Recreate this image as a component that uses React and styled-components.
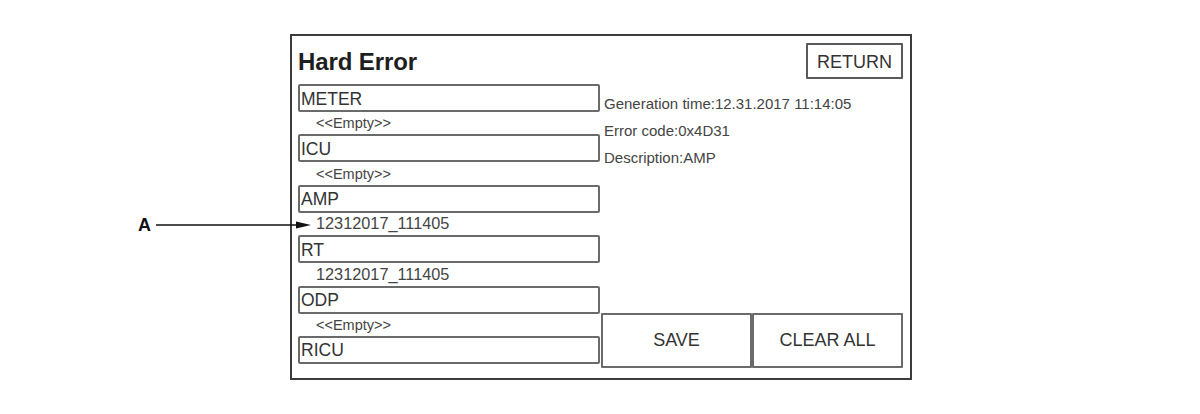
import styled, { createGlobalStyle } from "styled-components"

const Global = createGlobalStyle`
  body {
    margin: 0;
    background: #fff;
    font-family: "Liberation Sans", Arial, sans-serif;
  }
`;

const Page = styled.div`
  position: relative;
  width: 1200px;
  height: 414px;
  padding: 34px 0 0 2px;
  box-sizing: border-box;
`;

const Frame = styled.div`
  width: 622px;
  height: 346px;
  margin: 0 auto;
  box-sizing: border-box;
  border: 2px solid #3c3c3c;
  padding: 7px 7px 10px 6px;
  display: grid;
  grid-template-columns: 302px 302px;
  grid-template-rows: 36px 1fr;
  column-gap: 1px;
  row-gap: 5px;
`;

const Header = styled.div`
  grid-column: 1 / 3;
  display: flex;
  align-items: center;
  justify-content: space-between;
`;

const Title = styled.h1`
  margin: 0;
  font-size: 24px;
  font-weight: 700;
  color: #1e1e1e;
  line-height: 1;
  padding-top: 1px;
  letter-spacing: -0.1px;
`;

const ReturnButton = styled.button`
  width: 97px;
  height: 36px;
  box-sizing: border-box;
  border: 2px solid #5a5a5a;
  border-radius: 1px;
  background: #fff;
  font-family: inherit;
  font-size: 18px;
  color: #333;
  padding: 2px 0 0;
`;

const List = styled.div`
  display: flex;
  flex-direction: column;
`;

const Box = styled.div`
  height: 28px;
  box-sizing: border-box;
  border: 2px solid #6a6a6a;
  border-radius: 2px;
  padding: 2px 0 0 1px;
  display: flex;
  align-items: center;
  font-size: 17.5px;
  color: #333;
`;

const Label = styled.div`
  height: 22.4px;
  display: flex;
  align-items: center;
  padding-left: 18px;
  font-size: ${(p) => (p.$empty ? "14.5px" : "16.3px")};
  color: #444;
`;

const Right = styled.div`
  display: flex;
  flex-direction: column;
  justify-content: space-between;
`;

const Info = styled.div`
  padding: 6px 0 0 3px;
  display: flex;
  flex-direction: column;
`;

const InfoLine = styled.div`
  height: 27px;
  line-height: 27px;
  font-size: 15px;
  color: #444;
  white-space: nowrap;
`;

const ButtonRow = styled.div`
  display: flex;
`;

const ActionButton = styled.button`
  flex: 1;
  height: 55px;
  box-sizing: border-box;
  border: 2px solid #6a6a6a;
  border-radius: 1px;
  background: #fff;
  font-family: inherit;
  font-size: 18px;
  color: #333;
  padding: 0;
`;

const Callout = styled.div`
  position: absolute;
  left: 138px;
  top: 215px;
  display: flex;
  align-items: center;
  gap: 5px;
`;

const CalloutLetter = styled.span`
  font-size: 18px;
  font-weight: 700;
  color: #111;
  line-height: 20px;
`;

const items = [
  { name: "METER", note: "<<Empty>>", empty: true },
  { name: "ICU", note: "<<Empty>>", empty: true },
  { name: "AMP", note: "12312017_111405" },
  { name: "RT", note: "12312017_111405" },
  { name: "ODP", note: "<<Empty>>", empty: true },
  { name: "RICU" },
];

const App = () => {
  return (
    <Page>
      <Global />
      <Frame>
        <Header>
          <Title>Hard Error</Title>
          <ReturnButton>RETURN</ReturnButton>
        </Header>
        <List>
          {items.map((it) => (
            <div key={it.name}>
              <Box>{it.name}</Box>
              {it.note && <Label $empty={it.empty}>{it.note}</Label>}
            </div>
          ))}
        </List>
        <Right>
          <Info>
            <InfoLine>Generation time:12.31.2017 11:14:05</InfoLine>
            <InfoLine>Error code:0x4D31</InfoLine>
            <InfoLine>Description:AMP</InfoLine>
          </Info>
          <ButtonRow>
            <ActionButton>SAVE</ActionButton>
            <ActionButton>CLEAR ALL</ActionButton>
          </ButtonRow>
        </Right>
      </Frame>
      <Callout>
        <CalloutLetter>A</CalloutLetter>
        <svg width="155" height="10" viewBox="0 0 155 10">
          <line x1="0" y1="5" x2="143" y2="5" stroke="#111" strokeWidth="1.5" />
          <polygon points="140,1.5 155,5 140,8.5" fill="#111" />
        </svg>
      </Callout>
    </Page>
  )
}

export default App
